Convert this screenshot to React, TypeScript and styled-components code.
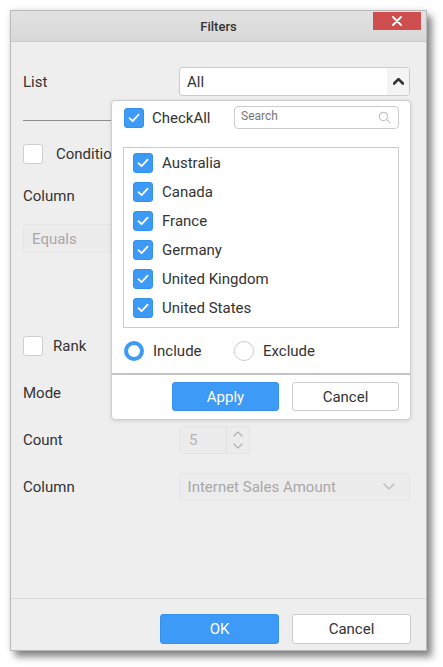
import React from 'react';
import styled, {createGlobalStyle} from 'styled-components';

const GlobalStyle = createGlobalStyle`
    html, body {
        margin: 0;
        padding: 0;
        background: #ffffff;
        font-family: Roboto, "Liberation Sans", sans-serif;
        color: #333333;
    }
    * {
        box-sizing: border-box;
    }
`;

const countries = ['Australia', 'Canada', 'France', 'Germany', 'United Kingdom', 'United States'];

const Check = () => (
    <svg width="12" height="10" viewBox="0 0 12 10">
        <path d="M1.5 5.2 L4.6 8.2 L10.6 1.6" fill="none" stroke="#fff" strokeWidth="1.8" strokeLinecap="round" strokeLinejoin="round"/>
    </svg>
);

const Chevron = ({up, color, size, weight}: {up?: boolean; color: string; size: number; weight: number}) => (
    <svg width={size} height={size * 0.6} viewBox="0 0 10 6">
        <path d={up ? 'M1 5 L5 1 L9 5' : 'M1 1 L5 5 L9 1'} fill="none" stroke={color} strokeWidth={weight} strokeLinecap="round" strokeLinejoin="round"/>
    </svg>
);

const App: React.FunctionComponent = () => {
    return (
        <Page>
            <GlobalStyle/>
            <Dialog>
                <Header>
                    <span/>
                    <h1>Filters</h1>
                    <CloseButton>
                        <svg width="10" height="10" viewBox="0 0 10 10">
                            <path d="M1 1 L9 9 M9 1 L1 9" stroke="#fff" strokeWidth="1.8" strokeLinecap="round"/>
                        </svg>
                    </CloseButton>
                </Header>
                <Body>
                    <Row $top={25} $height={29}>
                        <Label>List</Label>
                        <Select>
                            <span>All</span>
                            <div className="arrow"><Chevron up color="#333" size={11} weight={2.4}/></div>
                        </Select>
                    </Row>
                    <Divider/>
                    <Row $top={23} $height={20}>
                        <Box $checked={false}/>
                        <BoxText>Condition</BoxText>
                    </Row>
                    <Row $top={22} $height={20}>
                        <Label>Column</Label>
                    </Row>
                    <Row $top={18} $height={29}>
                        <Disabled $width={178}>Equals</Disabled>
                    </Row>
                    <Row $top={83} $height={20}>
                        <Box $checked={false}/>
                        <BoxText $gap={10}>Rank</BoxText>
                    </Row>
                    <Row $top={22} $height={29}>
                        <Label>Mode</Label>
                    </Row>
                    <Row $top={19} $height={28}>
                        <Label>Count</Label>
                        <Spinner>
                            <span>5</span>
                            <div className="buttons">
                                <Chevron up color="#b5b5b5" size={10} weight={1.3}/>
                                <Chevron color="#b5b5b5" size={10} weight={1.3}/>
                            </div>
                        </Spinner>
                    </Row>
                    <Row $top={19} $height={28}>
                        <Label>Column</Label>
                        <Disabled $width={232}>
                            <span>Internet Sales Amount</span>
                            <Chevron color="#c4c4c4" size={12} weight={1.4}/>
                        </Disabled>
                    </Row>
                </Body>
                <Footer>
                    <Button $primary $width={119} $height={30}>OK</Button>
                    <Button $width={119} $height={30}>Cancel</Button>
                </Footer>
                <Popup>
                    <PopupTop>
                        <Box $checked><Check/></Box>
                        <BoxText $gap={8}>CheckAll</BoxText>
                        <Search>
                            <span>Search</span>
                            <svg width="13" height="13" viewBox="0 0 12 12">
                                <circle cx="5" cy="5" r="3.8" fill="none" stroke="#c2c2c2" strokeWidth="1.1"/>
                                <path d="M7.8 7.8 L11 11" stroke="#c2c2c2" strokeWidth="1.1" strokeLinecap="round"/>
                            </svg>
                        </Search>
                    </PopupTop>
                    <List>
                        {countries.map(country => (
                            <Item key={country}>
                                <Box $checked><Check/></Box>
                                <span>{country}</span>
                            </Item>
                        ))}
                    </List>
                    <Radios>
                        <RadioOption>
                            <Radio $on/>
                            <span>Include</span>
                        </RadioOption>
                        <RadioOption>
                            <Radio/>
                            <span>Exclude</span>
                        </RadioOption>
                    </Radios>
                    <PopupFooter>
                        <Button $primary $width={107} $height={29}>Apply</Button>
                        <Button $width={107} $height={29}>Cancel</Button>
                    </PopupFooter>
                </Popup>
            </Dialog>
        </Page>
    );
}

const Page = styled.div`
    width: 443px;
    height: 667px;
    padding: 10px 0 0 10px;
    overflow: hidden;
`;

const Dialog = styled.div`
    position: relative;
    width: 417px;
    height: 641px;
    display: flex;
    flex-direction: column;
    background: #eeeeee;
    border: 1px solid #b9b9b9;
    box-shadow: 5px 6px 7px rgba(0, 0, 0, 0.45), 0 0 6px rgba(0, 0, 0, 0.12);
`;

const Header = styled.div`
    height: 31px;
    flex-shrink: 0;
    display: grid;
    grid-template-columns: 1fr auto 1fr;
    align-items: center;
    background: linear-gradient(#e2e2e2, #d8d8d8);
    border-bottom: 1px solid #c9c9c9;
    h1 {
        margin: 0;
        font-size: 13px;
        font-weight: 500;
        color: #333;
    }
`;

const CloseButton = styled.div`
    justify-self: end;
    align-self: start;
    width: 48px;
    height: 18px;
    margin: 1px 5px 0 0;
    background: #cf4f50;
    display: flex;
    align-items: center;
    justify-content: center;
`;

const Body = styled.div`
    flex: 1;
    padding: 0 16px 0 12px;
    display: flex;
    flex-direction: column;
`;

const Row = styled.div<{$top: number; $height: number}>`
    display: flex;
    align-items: center;
    margin-top: ${p => p.$top}px;
    height: ${p => p.$height}px;
`;

const Label = styled.div`
    width: 156px;
    font-size: 15px;
    color: #333;
`;

const Select = styled.div`
    flex: 1;
    height: 29px;
    display: flex;
    align-items: center;
    justify-content: space-between;
    background: #fff;
    border: 1px solid #cccccc;
    border-radius: 3px;
    padding-left: 7px;
    font-size: 15px;
    overflow: hidden;
    .arrow {
        width: 22px;
        height: 100%;
        background: #f4f4f4;
        display: flex;
        align-items: center;
        justify-content: center;
    }
`;

const Divider = styled.div`
    margin-top: 24px;
    height: 1px;
    background: #8f8f8f;
`;

const Box = styled.div<{$checked: boolean}>`
    width: 20px;
    height: 20px;
    flex-shrink: 0;
    border-radius: 3px;
    display: flex;
    align-items: center;
    justify-content: center;
    background: ${p => p.$checked ? '#3d9af7' : '#ffffff'};
    border: 1px solid ${p => p.$checked ? '#3391f0' : '#cfcfcf'};
`;

const BoxText = styled.span<{$gap?: number}>`
    margin-left: ${p => p.$gap ?? 13}px;
    font-size: 15px;
    color: #333;
`;

const Disabled = styled.div<{$width: number}>`
    width: ${p => p.$width}px;
    height: 100%;
    display: flex;
    align-items: center;
    justify-content: space-between;
    padding: 0 14px 0 8px;
    background: #ececec;
    border: 1px solid #e6e6e6;
    border-radius: 3px;
    font-size: 15px;
    color: #a8a8a8;
`;

const Spinner = styled.div`
    width: 71px;
    height: 100%;
    display: flex;
    align-items: center;
    background: #ececec;
    border: 1px solid #e4e4e4;
    border-radius: 3px;
    font-size: 15px;
    color: #b5b5b5;
    span {
        flex: 1;
        padding-left: 9px;
    }
    .buttons {
        width: 23px;
        height: 100%;
        border-left: 1px solid #e0e0e0;
        display: flex;
        flex-direction: column;
        align-items: center;
        justify-content: center;
        gap: 6px;
    }
`;

const Footer = styled.div`
    height: 52px;
    flex-shrink: 0;
    border-top: 1px solid #d9d9d9;
    display: flex;
    justify-content: flex-end;
    align-items: flex-start;
    gap: 13px;
    padding: 15px 15px 0 0;
`;

const Button = styled.div<{$primary?: boolean; $width: number; $height: number}>`
    width: ${p => p.$width}px;
    height: ${p => p.$height}px;
    display: flex;
    align-items: center;
    justify-content: center;
    border-radius: 3px;
    font-size: 15px;
    background: ${p => p.$primary ? '#3d9af7' : '#ffffff'};
    color: ${p => p.$primary ? '#ffffff' : '#333333'};
    border: 1px solid ${p => p.$primary ? '#3590ee' : '#cccccc'};
`;

const Popup = styled.div`
    position: absolute;
    left: 100px;
    top: 89px;
    width: 300px;
    height: 320px;
    background: #ffffff;
    border: 1px solid #cdcdcd;
    border-radius: 4px;
    box-shadow: 0 1px 4px rgba(0, 0, 0, 0.12);
    display: flex;
    flex-direction: column;
`;

const PopupTop = styled.div`
    display: flex;
    align-items: center;
    height: 23px;
    margin-top: 5px;
    padding: 0 11px 0 12px;
`;

const Search = styled.div`
    margin-left: auto;
    width: 165px;
    height: 23px;
    border: 1px solid #cccccc;
    border-radius: 4px;
    display: flex;
    align-items: center;
    justify-content: space-between;
    padding: 0 7px 0 6px;
    font-size: 12px;
    color: #777;
    span {
        margin-top: -3px;
    }
`;

const List = styled.div`
    margin: 18px 11px 0 11px;
    height: 181px;
    border: 1px solid #cccccc;
    padding: 0 0 0 9px;
`;

const Item = styled.div`
    display: flex;
    align-items: center;
    height: 29px;
    font-size: 15px;
    color: #333;
    span {
        margin-left: 9px;
    }
`;

const Radios = styled.div`
    display: flex;
    align-items: center;
    height: 20px;
    margin-top: 13px;
    padding-left: 12px;
`;

const RadioOption = styled.div`
    width: 110px;
    display: flex;
    align-items: center;
    font-size: 15px;
    color: #333;
    span {
        margin-left: 9px;
    }
`;

const Radio = styled.div<{$on?: boolean}>`
    width: 20px;
    height: 20px;
    border-radius: 50%;
    background: #ffffff;
    border: ${p => p.$on ? '4px solid #3d9af7' : '1px solid #cccccc'};
`;

const PopupFooter = styled.div`
    margin-top: 12px;
    border-top: 2px solid #c4c4c4;
    flex: 1;
    display: flex;
    justify-content: flex-end;
    gap: 13px;
    padding: 7px 11px 0 0;
`;

export default App;
